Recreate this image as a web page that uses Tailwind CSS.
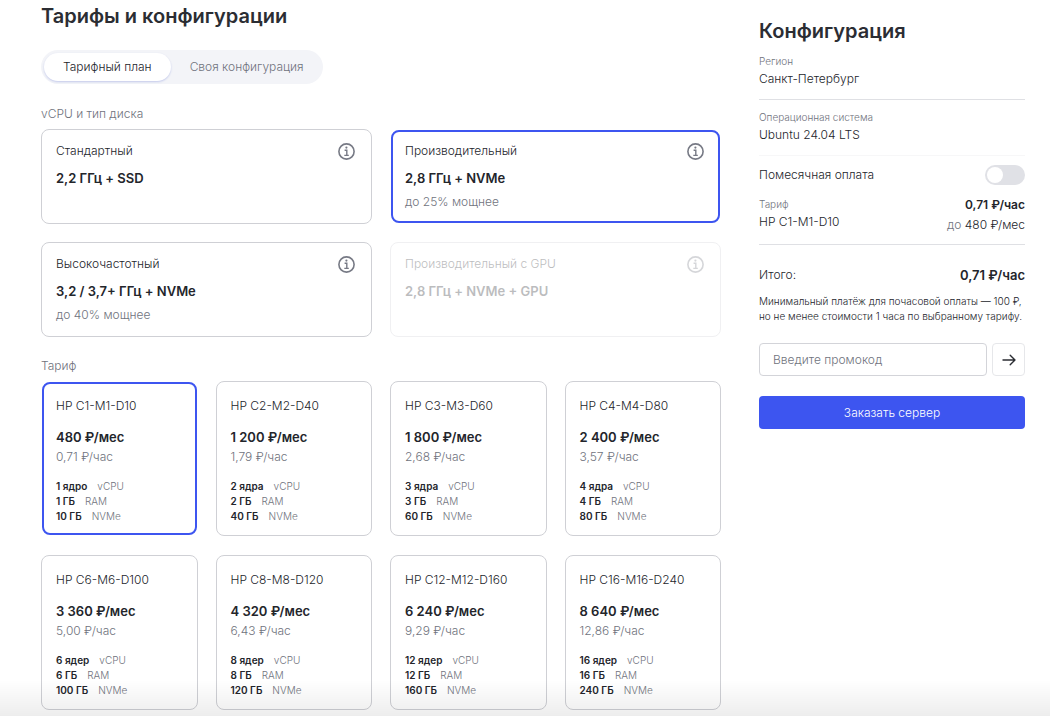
<!DOCTYPE html>
<html lang="ru">
<head>
<meta charset="utf-8">
<meta name="viewport" content="width=device-width, initial-scale=1">
<title>Тарифы и конфигурации</title>
<script src="https://cdn.jsdelivr.net/npm/@tailwindcss/browser@4"></script>
</head>
<body class="bg-white font-['Inter',sans-serif] text-xs leading-5 font-light text-[#23252b]">
<div class="flex items-start gap-[38px] overflow-hidden pr-[25px] pb-1.5 pl-[41px]">
  <main class="min-w-0 flex-1 pt-0.5">
    <h1 class="text-xl leading-7 font-[560] text-[#2b2d33]">Тарифы и конфигурации</h1>

    <div class="mt-5 inline-flex h-[34px] rounded-full bg-[#f3f4f8] p-[3px]" role="tablist">
      <button type="button" role="tab" aria-selected="true" class="rounded-full bg-white px-[19px] shadow-[0_1px_2px_rgba(60,80,200,0.25)]">Тарифный план</button>
      <button type="button" role="tab" aria-selected="false" class="rounded-full pr-4 pl-[19px] text-[#70737d]">Своя конфигурация</button>
    </div>

    <fieldset class="mt-5">
      <legend class="mb-[5px] text-[#70737d]">vCPU и тип диска</legend>
      <div id="cpus" class="grid auto-rows-fr grid-cols-2 gap-[18px]"></div>
    </fieldset>

    <fieldset class="mt-[19px]">
      <legend class="mb-[5px] text-[#70737d]">Тариф</legend>
      <div id="plans" class="grid auto-rows-fr grid-cols-4 gap-x-[18px] gap-y-[19px]"></div>
    </fieldset>
  </main>

  <aside class="w-[266px] shrink-0 pt-[17px]">
    <h2 class="text-xl leading-7 font-[560] text-[#2b2d33]">Конфигурация</h2>
    <dl>
      <div class="border-b border-[#dfe0e4] pt-2 pb-2.5">
        <dt class="text-[10px] leading-4 text-[#70737d]">Регион</dt>
        <dd>Санкт-Петербург</dd>
      </div>
      <div class="border-b border-[#f7f7f8] pt-[9px] pb-2.5">
        <dt class="text-[10px] leading-4 text-[#70737d]">Операционная система</dt>
        <dd>Ubuntu 24.04 LTS</dd>
      </div>
    </dl>
    <div class="mt-[9px] flex items-center justify-between">
      <label for="monthly">Помесячная оплата</label>
      <input id="monthly" type="checkbox" role="switch" class="h-5 w-10 appearance-none rounded-full bg-[#e0e1e6] p-0.5 before:block before:size-4 before:rounded-full before:bg-white checked:bg-[#3d55f0] checked:before:ml-5">
    </div>
    <div class="mt-2.5 flex justify-between border-b border-[#dfe0e4] pb-[9px]">
      <div class="pt-px">
        <p class="text-[10px] leading-4 text-[#70737d]">Тариф</p>
        <p>HP C1-M1-D10</p>
      </div>
      <div class="text-right">
        <p class="font-semibold">0,71 ₽/час</p>
        <p><span class="text-[#70737d]">до</span> 480 ₽/мес</p>
      </div>
    </div>
    <div class="mt-5 flex justify-between">
      <span>Итого:</span>
      <strong class="text-[13px] font-semibold">0,71 ₽/час</strong>
    </div>
    <p class="mt-[9px] text-[10px] leading-[15px]">Минимальный платёж для почасовой оплаты — 100 ₽, но не менее стоимости 1 часа по выбранному тарифу.</p>
    <form class="mt-[19px]">
      <div class="flex gap-[5px]">
        <input type="text" aria-label="Промокод" placeholder="Введите промокод" class="h-[33px] min-w-0 flex-1 rounded-sm border border-[#d3d4d9] px-[13px] placeholder:text-[#70737d]">
        <button type="button" aria-label="Применить промокод" class="flex size-[33px] items-center justify-center rounded-sm border border-[#e6e7ea]">
          <svg class="h-3 w-3.5" viewBox="0 0 14 12" fill="none" stroke="#2b2d33" stroke-width="1.4" stroke-linecap="round" stroke-linejoin="round"><path d="M1 6h12M8.200 1.300 13 6l-4.800 4.700"/></svg>
        </button>
      </div>
      <button type="button" class="mt-5 h-[33px] w-full rounded-sm bg-[#3d55f0] font-light text-white">Заказать сервер</button>
    </form>
  </aside>
</div>
<div class="pointer-events-none fixed inset-x-0 bottom-0 h-9 bg-linear-to-t from-black/7 to-transparent"></div>

<script>
  const cpus = [
    ['Стандартный', '2,2 ГГц + SSD', ''],
    ['Производительный', '2,8 ГГц + NVMe', 'до 25% мощнее'],
    ['Высокочастотный', '3,2 / 3,7+ ГГц + NVMe', 'до 40% мощнее'],
    ['Производительный с GPU', '2,8 ГГц + NVMe + GPU', ''],
  ];
  const plans = [
    ['HP C1-M1-D10', '480', '0,71', '1 ядро', '1', '10'],
    ['HP C2-M2-D40', '1 200', '1,79', '2 ядра', '2', '40'],
    ['HP C3-M3-D60', '1 800', '2,68', '3 ядра', '3', '60'],
    ['HP C4-M4-D80', '2 400', '3,57', '4 ядра', '4', '80'],
    ['HP C6-M6-D100', '3 360', '5,00', '6 ядер', '6', '100'],
    ['HP C8-M8-D120', '4 320', '6,43', '8 ядер', '8', '120'],
    ['HP C12-M12-D160', '6 240', '9,29', '12 ядер', '12', '160'],
    ['HP C16-M16-D240', '8 640', '12,86', '16 ядер', '16', '240'],
  ];
  document.getElementById('cpus').innerHTML = cpus.map(([name, spec, note], i) => `
    <label class="relative rounded-lg border border-[#cfd0d5] px-3.5 py-[11px] has-checked:m-px has-checked:border-2 has-checked:border-[#3d55f0] has-checked:px-3 has-checked:py-[9px] has-disabled:opacity-30">
      <input type="radio" name="cpu" class="sr-only" ${i === 1 ? 'checked' : ''} ${i === 3 ? 'disabled' : ''}>
      <span class="flex items-center justify-between">${name}
        <svg class="mr-0.5 size-[17px]" viewBox="0 0 17 17" fill="none" stroke="#777a85" stroke-width="1.6"><circle cx="8.500" cy="8.500" r="7.600"/><path d="M6.600 7.300h2.200v5M6.300 12.400h4.500" stroke-width="1.400"/><circle cx="8.400" cy="4.600" r="1.100" fill="#777a85" stroke="none"/></svg>
      </span>
      <span class="mt-[7px] block text-[13px] font-semibold">${spec}</span>
      <span class="mt-1 block min-h-5 text-[#70737d]">${note}</span>
    </label>`).join('');
  document.getElementById('plans').innerHTML = plans.map(([name, month, hour, cores, ram, disk], i) => `
    <label class="relative rounded-lg border border-[#cfd0d5] px-3.5 pt-3.5 pb-[11px] has-checked:m-px has-checked:border-2 has-checked:border-[#3d55f0] has-checked:px-3 has-checked:pt-3 has-checked:pb-[9px]">
      <input type="radio" name="plan" class="sr-only" ${i === 0 ? 'checked' : ''}>
      <span class="block">${name}</span>
      <span class="mt-[11px] block text-[13px] font-semibold">${month} ₽/мес</span>
      <span class="block text-[#70737d]">${hour} ₽/час</span>
      <span class="mt-3 block text-[10px] leading-[15px] text-[#70737d]">
        <span class="flex gap-2.5"><b class="font-semibold text-[#23252b]">${cores}</b>vCPU</span>
        <span class="flex gap-2.5"><b class="font-semibold text-[#23252b]">${ram} ГБ</b>RAM</span>
        <span class="flex gap-2.5"><b class="font-semibold text-[#23252b]">${disk} ГБ</b>NVMe</span>
      </span>
    </label>`).join('');
</script>
</body>
</html>
